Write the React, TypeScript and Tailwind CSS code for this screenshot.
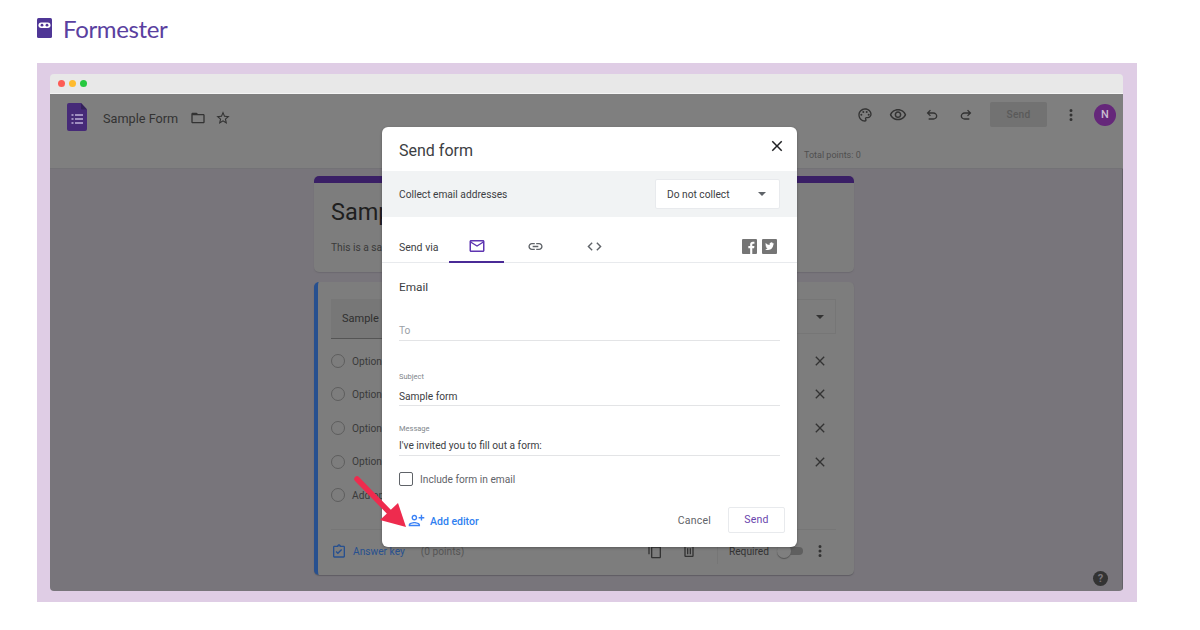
import React from "react";

const roboto = { fontFamily: "Roboto, sans-serif" };

function Ic({ className = "", size = 24, children, view = "0 0 24 24" }: { className?: string; size?: number; children: React.ReactNode; view?: string }) {
  return (
    <svg width={size} height={size} viewBox={view} className={className} fill="currentColor">
      {children}
    </svg>
  );
}

const Close = ({ size = 16, className = "" }: { size?: number; className?: string }) => (
  <Ic size={size} className={className}>
    <path d="M19 6.41 17.59 5 12 10.59 6.41 5 5 6.41 10.59 12 5 17.59 6.41 19 12 13.41 17.59 19 19 17.59 13.41 12z" />
  </Ic>
);

const Dots = ({ className = "" }: { className?: string }) => (
  <Ic size={18} className={className}>
    <path d="M12 8a2 2 0 1 0 0-4 2 2 0 0 0 0 4zm0 2a2 2 0 1 0 0 4 2 2 0 0 0 0-4zm0 6a2 2 0 1 0 0 4 2 2 0 0 0 0-4z" />
  </Ic>
);

function OptionRow({ label, close = true }: { label: string; close?: boolean }) {
  return (
    <div className="flex items-center h-[33.6px] pl-[13px] pr-[26px]">
      <span className="w-[14px] h-[14px] rounded-full border-[1.5px] border-[#5d5d5d] mr-[7px] shrink-0" />
      <span className="text-[10.2px] text-[#3a3a3a] pt-[1px]">{label}</span>
      <span className="flex-1" />
      {close ? <Close size={16} className="text-[#333]" /> : null}
    </div>
  );
}

function Field({ label, value, h, gap = "mb-[5px]", after = "mb-[2px]" }: { label?: string; value: string; h: string; gap?: string; after?: string }) {
  return (
    <div className={`${h} flex flex-col justify-end mx-[17px] border-b-[1.5px] border-[#e3e4e6]`}>
      {label ? <div className={`text-[7.5px] leading-[10px] text-[#80868b] ${gap}`}>{label}</div> : null}
      <div className={`text-[10.2px] leading-[14px] ${after} ${label ? "text-[#3c4043]" : "text-[#9aa0a6]"}`}>{value}</div>
    </div>
  );
}

export default function App() {
  return (
    <div className="relative w-[1200px] h-[630px] bg-white overflow-hidden flex flex-col" style={roboto}>
      <div className="h-[63px] pl-[37px] pt-[17px] flex items-start shrink-0">
        <svg width="15" height="20" viewBox="0 0 15 20" className="mt-[1px]">
          <rect width="15" height="20" rx="1.5" fill="#4f3696" />
          <rect x="1.5" y="4.5" width="12" height="5.5" rx="2.7" fill="#fff" />
          <circle cx="5" cy="7.2" r="1.4" fill="#4f3696" />
          <circle cx="10" cy="7.2" r="1.4" fill="#4f3696" />
        </svg>
        <span className="ml-[11px] text-[24px] leading-[24px] text-[#5a3fa0] tracking-[-0.35px]" style={{ fontFamily: "Lato, sans-serif" }}>
          Formester
        </span>
      </div>

      <div className="w-[1100px] h-[539px] ml-[37px] bg-[#dfcde5] pt-[11px] pl-[13px] shrink-0">
        <div className="relative w-[1073px] h-[517px] rounded-[4px] overflow-hidden flex flex-col">
          <div className="h-[20px] bg-[#e8e8e8] border-b border-[#f4f4f4] flex items-center gap-[4px] pl-[8px] shrink-0">
            <span className="w-[7px] h-[7px] rounded-full bg-[#fd5c55]" />
            <span className="w-[7px] h-[7px] rounded-full bg-[#febb2e]" />
            <span className="w-[7px] h-[7px] rounded-full bg-[#27c83f]" />
          </div>

          <div className="h-[75px] bg-[#7f7f7f] border-b border-[#737276] shrink-0 flex flex-col">
            <div className="h-[42px] flex items-start pl-[17px] pr-[7px]">
              <svg width="20" height="28" viewBox="0 0 20 28" className="mt-[9px]">
                <path d="M2 0h12l6 6.5V26a2 2 0 0 1-2 2H2a2 2 0 0 1-2-2V2a2 2 0 0 1 2-2z" fill="#462a78" />
                <path d="M14 0l6 6.5h-5a1 1 0 0 1-1-1z" fill="#33205a" />
                <g fill="#a08fc0">
                  <rect x="4.5" y="11" width="2" height="2" />
                  <rect x="8" y="11" width="8" height="2" />
                  <rect x="4.5" y="15" width="2" height="2" />
                  <rect x="8" y="15" width="8" height="2" />
                  <rect x="4.5" y="19" width="2" height="2" />
                  <rect x="8" y="19" width="8" height="2" />
                </g>
              </svg>
              <span className="ml-[16px] text-[12.7px] leading-[18px] text-[#333] mt-[16px]">Sample Form</span>
              <Ic size={16} className="ml-[12px] mt-[16px] text-[#333]">
                <path d="M20 6h-8l-2-2H4c-1.1 0-2 .9-2 2v12c0 1.1.9 2 2 2h16c1.1 0 2-.9 2-2V8c0-1.1-.9-2-2-2zm0 12H4V8h16v10z" />
              </Ic>
              <Ic size={16} className="ml-[9px] mt-[16px] text-[#333]">
                <path d="m22 9.24-7.19-.62L12 2 9.19 8.63 2 9.24l5.46 4.73L5.82 21 12 17.27 18.18 21l-1.63-7.03L22 9.24zM12 15.4l-3.76 2.27 1-4.28-3.32-2.88 4.38-.38L12 6.1l1.71 4.04 4.38.38-3.32 2.88 1 4.28L12 15.4z" />
              </Ic>
              <span className="flex-1" />
              <div className="flex items-center text-[#333] h-[42px]">
                <Ic size={16}>
                  <path d="M12 22C6.49 22 2 17.51 2 12S6.49 2 12 2s10 4.04 10 9c0 3.31-2.69 6-6 6h-1.77c-.28 0-.5.22-.5.5 0 .12.05.23.13.33.41.47.64 1.06.64 1.67A2.5 2.5 0 0 1 12 22zm0-18c-4.41 0-8 3.59-8 8s3.59 8 8 8c.28 0 .5-.22.5-.5a.54.54 0 0 0-.14-.35c-.41-.46-.63-1.05-.63-1.65a2.5 2.5 0 0 1 2.5-2.5H16c2.21 0 4-1.79 4-4 0-3.86-3.59-7-8-7z" />
                  <circle cx="6.5" cy="11.5" r="1.5" /><circle cx="9.5" cy="7.5" r="1.5" /><circle cx="14.5" cy="7.5" r="1.5" /><circle cx="17.5" cy="11.5" r="1.5" />
                </Ic>
                <Ic size={18} className="ml-[16px]">
                  <path d="M12 6a9.77 9.77 0 0 1 8.82 5.5A9.77 9.77 0 0 1 12 17a9.77 9.77 0 0 1-8.82-5.5A9.77 9.77 0 0 1 12 6m0-2C7 4 2.73 7.11 1 11.5 2.73 15.89 7 19 12 19s9.27-3.11 11-7.5C21.27 7.11 17 4 12 4zm0 5a2.5 2.5 0 1 1 0 5 2.5 2.5 0 0 1 0-5m0-2c-2.48 0-4.5 2.02-4.5 4.5S9.52 16 12 16s4.5-2.02 4.5-4.5S14.48 7 12 7z" />
                </Ic>
                <Ic size={16} className="ml-[17px]">
                  <path d="M7 19v-2h7.1c1.05 0 1.96-.33 2.73-1 .78-.67 1.17-1.5 1.17-2.5s-.39-1.83-1.17-2.5c-.77-.67-1.68-1-2.73-1H7.8l2.6 2.6L9 14 4 9l5-5 1.4 1.4L7.8 8h6.3c1.62 0 3 .53 4.16 1.58C19.42 10.63 20 11.94 20 13.5s-.58 2.87-1.74 3.93C17.1 18.47 15.72 19 14.1 19H7z" />
                </Ic>
                <Ic size={16} className="ml-[18px] -scale-x-100">
                  <path d="M7 19v-2h7.1c1.05 0 1.96-.33 2.73-1 .78-.67 1.17-1.5 1.17-2.5s-.39-1.83-1.17-2.5c-.77-.67-1.68-1-2.73-1H7.8l2.6 2.6L9 14 4 9l5-5 1.4 1.4L7.8 8h6.3c1.62 0 3 .53 4.16 1.58C19.42 10.63 20 11.94 20 13.5s-.58 2.87-1.74 3.93C17.1 18.47 15.72 19 14.1 19H7z" />
                </Ic>
              </div>
              <div className="ml-[16px] mt-[8px] w-[57px] h-[25px] rounded-[2px] bg-[#727272] flex items-center justify-center text-[10.2px] font-medium text-[#5a5a5a] tracking-[0.2px]">
                Send
              </div>
              <Dots className="ml-[15px] mt-[12px] text-[#333]" />
              <div className="ml-[14px] mt-[10px] w-[22px] h-[22px] rounded-full bg-[#65277a] flex items-center justify-center text-[11px] font-medium text-[#c9bdd0]">
                N
              </div>
            </div>
            <div className="flex-1 flex items-start pl-[754px] pt-[13px]">
              <span className="text-[9px] leading-[12px] text-[#4f4f4f]">Total points: 0</span>
            </div>
          </div>

          <div className="relative flex-1 bg-[#78757b] pl-[264px] pt-[7px] border-r-[1.5px] border-[#636167] flex flex-col gap-[10px]">
            <div className="w-[540px] h-[96px] bg-[#7d7d7d] rounded-[5px] shadow-[0_1px_1px_#6c6a70] overflow-hidden">
              <div className="h-[7px] bg-[#3a1f66]" />
              <div className="pl-[17px] pt-[11px] text-[23.5px] leading-[36px] text-[#1f1f1f]">Samp</div>
              <div className="pl-[17px] pt-[11px] text-[10.2px] leading-[14px] text-[#3a3a3a]">This is a sa</div>
            </div>

            <div className="w-[540px] h-[293px] bg-[#7d7d7d] rounded-[5px] shadow-[0_1px_1px_#5f5d63] border-l-[4px] border-[#27508f] pt-[17px] flex flex-col">
              <div className="flex h-[40px] pl-[13px] pr-[18px] gap-[8px] items-start">
                <div className="flex-1 h-[40px] bg-[#777777] border-b border-[#555] flex items-center pl-[11px] pt-[2px] text-[11px] text-[#2f2f2f]">Sample</div>
                <div className="w-[200px] h-[35px] border border-[#767676] flex items-center justify-end pr-[11px]">
                  <svg width="8" height="4" viewBox="0 0 8 4"><path d="M0 0h8L4 4z" fill="#333" /></svg>
                </div>
              </div>
              <div className="pt-[5px]">
                <OptionRow label="Option 1" />
                <OptionRow label="Option 2" />
                <OptionRow label="Option 3" />
                <OptionRow label="Option 4" />
                <OptionRow label="Add option" close={false} />
              </div>
              <div className="ml-[13px] mr-[18px] mt-[17px] border-t border-[#767676] pt-[4px] flex items-center h-[40px] pr-[7px]">
                <Ic size={16} className="text-[#27508f]">
                  <path d="M19 4h-4.18C14.4 2.84 13.3 2 12 2s-2.4.84-2.82 2H5c-1.1 0-2 .9-2 2v14c0 1.1.9 2 2 2h14c1.1 0 2-.9 2-2V6c0-1.1-.9-2-2-2zm-7 0a1 1 0 1 1 0 2 1 1 0 0 1 0-2zm7 16H5V6h14v14zm-2.3-9.6-1.4-1.4-5 5-2-2-1.4 1.4 3.4 3.4z" />
                </Ic>
                <span className="ml-[6px] text-[10.2px] text-[#27508f]">Answer key</span>
                <span className="ml-[16px] text-[10.2px] text-[#555]">(0 points)</span>
                <span className="flex-1" />
                <Ic size={16} className="text-[#333]">
                  <path d="M16 1H4c-1.1 0-2 .9-2 2v14h2V3h12V1zm3 4H8c-1.1 0-2 .9-2 2v14c0 1.1.9 2 2 2h11c1.1 0 2-.9 2-2V7c0-1.1-.9-2-2-2zm0 16H8V7h11v14z" />
                </Ic>
                <Ic size={16} className="ml-[18px] text-[#333]">
                  <path d="M15 4V3H9v1H4v2h1v13c0 1.1.9 2 2 2h10c1.1 0 2-.9 2-2V6h1V4h-5zm2 15H7V6h10v13zM9 8h2v9H9zm4 0h2v9h-2z" />
                </Ic>
                <span className="ml-[20px] w-px h-[26px] bg-[#767676]" />
                <span className="ml-[11px] text-[10.2px] text-[#333]">Required</span>
                <span className="relative ml-[8px] w-[26px] h-[14px] flex items-center">
                  <span className="w-full h-[8px] ml-[4px] rounded-full bg-[#5f5f5f]" />
                  <span className="absolute left-0 top-0 w-[14px] h-[14px] rounded-full bg-[#7f7f7f] shadow-[0_1px_1px_#555]" />
                </span>
                <Dots className="ml-[8px] text-[#333]" />
              </div>
            </div>

            <div className="absolute right-[14px] bottom-[5px] w-[15px] h-[15px] rounded-full bg-[#333] flex items-center justify-center text-[11px] font-bold leading-none text-[#78757b]">?</div>
          </div>

          <div className="absolute left-[332px] top-[53px] w-[415px] h-[420px] bg-white rounded-[6px] shadow-[0_1px_3px_rgba(0,0,0,0.3)] flex flex-col text-[#3c4043]">
            <div className="h-[44px] pl-[17px] pr-[11px] flex items-start justify-between shrink-0">
              <span className="text-[16px] leading-[22px] pt-[13px] text-[#3c4043]">Send form</span>
              <Close size={18} className="mt-[10px] text-[#202124]" />
            </div>
            <div className="h-[46px] bg-[#f1f3f4] pl-[17px] pr-[17px] flex items-center justify-between shrink-0">
              <span className="text-[10.2px] text-[#3c4043] pt-[1px]">Collect email addresses</span>
              <div className="w-[125px] h-[30px] bg-white border border-[#e8eaed] rounded-[2px] flex items-center pl-[11px] pr-[13px] justify-between">
                <span className="text-[10.2px] pt-[1px]">Do not collect</span>
                <svg width="8" height="4" viewBox="0 0 8 4"><path d="M0 0h8L4 4z" fill="#5f6368" /></svg>
              </div>
            </div>
            <div className="h-[46px] border-b border-[#e8eaed] pl-[17px] pr-[20px] flex shrink-0">
              <span className="text-[10.5px] self-end pb-[7px] leading-[14px] w-[40px] whitespace-nowrap">Send via</span>
              <div className="ml-[10px] w-[55px] border-b-[2px] border-[#4a2a96] flex items-center justify-center pt-[13px] mb-[-1px]">
                <Ic size={18} className="text-[#5e35b1]">
                  <path d="M20 4H4c-1.1 0-2 .9-2 2v12c0 1.1.9 2 2 2h16c1.1 0 2-.9 2-2V6c0-1.1-.9-2-2-2zm0 14H4V8l8 5 8-5v10zm-8-7L4 6h16l-8 5z" />
                </Ic>
              </div>
              <div className="ml-[3px] w-[57px] flex items-center justify-center pt-[13px]">
                <Ic size={17} className="text-[#5f6368]">
                  <path d="M3.9 12c0-1.71 1.39-3.1 3.1-3.1h4V7H7c-2.76 0-5 2.24-5 5s2.24 5 5 5h4v-1.9H7c-1.71 0-3.1-1.39-3.1-3.1zM8 13h8v-2H8v2zm9-6h-4v1.9h4c1.71 0 3.1 1.39 3.1 3.1s-1.39 3.1-3.1 3.1h-4V17h4c2.76 0 5-2.24 5-5s-2.24-5-5-5z" />
                </Ic>
              </div>
              <div className="ml-[3px] w-[55px] flex items-center justify-center pt-[13px]">
                <Ic size={17} className="text-[#5f6368]">
                  <path d="M9.4 16.6 4.8 12l4.6-4.6L8 6l-6 6 6 6 1.4-1.4zm5.2 0 4.6-4.6-4.6-4.6L16 6l6 6-6 6-1.4-1.4z" />
                </Ic>
              </div>
              <span className="flex-1" />
              <div className="flex items-center gap-[5px] pt-[14px]">
                <svg width="15" height="15" viewBox="0 0 14 14"><rect width="14" height="14" rx="1" fill="#757575" /><path d="M9.6 14V8.6h1.7l.3-2H9.6V5.4c0-.6.2-1 1-1h1V2.6c-.2 0-.8-.1-1.5-.1-1.5 0-2.5.9-2.5 2.6v1.5H5.9v2h1.7V14z" fill="#fff" /></svg>
                <svg width="15" height="15" viewBox="0 0 14 14"><rect width="14" height="14" rx="1" fill="#757575" /><path d="M11.5 4.4c-.3.1-.7.2-1 .3.4-.2.6-.6.8-1-.3.2-.7.3-1.1.4a1.7 1.7 0 0 0-3 1.6C5.7 5.6 4.4 4.9 3.5 3.8c-.5.8-.2 1.8.5 2.3-.3 0-.5-.1-.8-.2 0 .8.6 1.5 1.4 1.7-.3.1-.5.1-.8 0 .2.7.9 1.2 1.6 1.2-.7.5-1.6.8-2.5.7.8.5 1.7.8 2.7.8 3.2 0 5-2.7 4.9-5.1.4-.2.7-.5 1-.8z" fill="#fff" /></svg>
              </div>
            </div>

            <div className="pl-[17px] pt-[17px] text-[11.8px] leading-[15px] text-[#3c4043] shrink-0 h-[33px]">Email</div>
            <Field value="To" h="h-[45px]" after="mb-[2px]" />
            <Field label="Subject" value="Sample form" h="h-[65px]" gap="mb-[8px]" after="mb-[1px]" />
            <Field label="Message" value="I've invited you to fill out a form:" h="h-[49.5px]" gap="mb-[5px]" after="mb-[2px]" />

            <div className="flex items-center pl-[17px] mt-[16px] shrink-0">
              <span className="w-[14px] h-[14px] rounded-[2px] border-[1.5px] border-[#5f6368] bg-white" />
              <span className="ml-[7px] text-[10.2px] text-[#5f6368]">Include form in email</span>
            </div>

            <div className="flex items-center pl-[26px] pr-[12px] mt-[20px] h-[28px] shrink-0">
              <Ic size={17} className="text-[#3b82f6]">
                <path d="M15 12c2.2 0 4-1.8 4-4s-1.8-4-4-4-4 1.8-4 4 1.8 4 4 4zm0-6c1.1 0 2 .9 2 2s-.9 2-2 2-2-.9-2-2 .9-2 2-2zm0 8c-2.7 0-8 1.3-8 4v2h16v-2c0-2.7-5.3-4-8-4zm-6 4c.2-.7 3.3-2 6-2s5.8 1.3 6 2H9zM6 12V9h3V7H6V4H4v3H1v2h3v3z" transform="matrix(-1 0 0 1 24 0)" />
              </Ic>
              <span className="ml-[5px] text-[10.5px] font-medium text-[#2f7ff0] mt-[2px]">Add editor</span>
              <span className="flex-1" />
              <span className="text-[10.5px] text-[#5f6368] tracking-[0.2px]">Cancel</span>
              <div className="ml-[17px] mt-[-2px] w-[57px] h-[26px] border border-[#e8eaed] rounded-[2px] flex items-center justify-center text-[10.5px] text-[#6a45ad] tracking-[0.2px]">Send</div>
            </div>
          </div>

          <svg width="60" height="60" viewBox="0 0 60 60" className="absolute left-[301px] top-[398px]">
            <path d="M6 7 L43 45" stroke="#ee2b4e" strokeWidth="5.5" strokeLinecap="round" />
            <path d="M55 55 L29 48 L47 31 Z" fill="#ee2b4e" />
          </svg>
        </div>
      </div>
    </div>
  );
}
